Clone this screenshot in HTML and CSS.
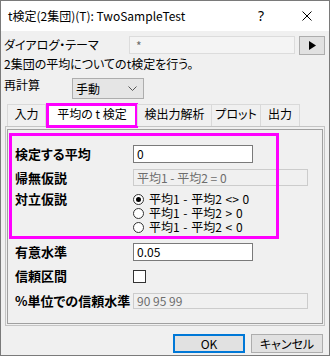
FILE: index.html
```html
<!DOCTYPE html>
<html>
<head>
    <title>t検定(2集団)</title>
    <meta charset="utf-8">
<link rel="stylesheet" href="styles.css">
</head>
<body>

  <div class="window">
    <div class="titlebar">
      <span class="title">t検定(2集団)(T): TwoSampleTest</span>
      <span class="help">?</span>
      <span class="close">
        <svg width="10" height="10" viewBox="0 0 10 10"><path d="M0.5 0.5 L9.5 9.5 M9.5 0.5 L0.5 9.5" stroke="#000" stroke-width="1" fill="none"/></svg>
      </span>
    </div>

    <div class="content">
      <div class="theme-row">
        <span class="theme-label">ダイアログ・テーマ</span>
        <div class="theme-input">*</div>
        <div class="theme-btn">
          <svg width="7" height="9" viewBox="0 0 7 9"><path d="M0 0 L7 4.5 L0 9 Z" fill="#000"/></svg>
        </div>
      </div>

      <div class="desc">2集団の平均についてのt検定を行う。</div>

      <div class="recalc-row">
        <span class="recalc-label">再計算</span>
        <div class="select">
          <span>手動</span>
          <svg width="9" height="5" viewBox="0 0 9 5"><path d="M0.5 0.5 L4.5 4.5 L8.5 0.5" stroke="#555" stroke-width="1" fill="none"/></svg>
        </div>
      </div>

      <div class="tabs">
        <div class="tab tab-in">入力</div>
        <div class="tab tab-active">平均の t 検定</div>
        <div class="tab tab-power">検出力解析</div>
        <div class="tab tab-plot">プロット</div>
        <div class="tab tab-out">出力</div>
      </div>

      <div class="panel">
        <div class="group">

          <div class="hl-wrap">
            <div class="row r-mean">
              <span class="lbl">検定する平均</span>
              <div class="field f-short">0</div>
            </div>
            <div class="row r-null">
              <span class="lbl">帰無仮説</span>
              <div class="field f-long disabled">平均1 - 平均2 = 0</div>
            </div>
            <div class="row r-alt">
              <span class="lbl">対立仮説</span>
              <div class="radios">
                <div class="radio"><span class="dot checked"></span>平均1 - 平均2 &lt;&gt; 0</div>
                <div class="radio"><span class="dot"></span>平均1 - 平均2 &gt; 0</div>
                <div class="radio"><span class="dot"></span>平均1 - 平均2 &lt; 0</div>
              </div>
            </div>
          </div>

          <div class="row r-sig">
            <span class="lbl">有意水準</span>
            <div class="field f-short">0.05</div>
          </div>
          <div class="row r-ci">
            <span class="lbl">信頼区間</span>
            <span class="check"></span>
          </div>
          <div class="row r-level">
            <span class="lbl">%単位での信頼水準</span>
            <div class="field f-long f-thin disabled">90 95 99</div>
          </div>

        </div>
      </div>

      <div class="footer">
        <button class="btn btn-ok">OK</button>
        <button class="btn">キャンセル</button>
      </div>
    </div>
  </div>

</body>
</html>
```

FILE: styles.css
```css
* {
  box-sizing: border-box;
}

body {
  margin: 0;
  font-family: "Noto Sans CJK JP", "Noto Sans", sans-serif;
  font-size: 12px;
  font-feature-settings: "palt";
  color: #000;
  background-color: #f0f0f0;
}

.window {
  width: 330px;
  height: 356px;
  border: 1px solid #7a7a7a;
  background-color: #f0f0f0;
}

/* title bar */
.titlebar {
  height: 30px;
  background-color: #fff;
  display: flex;
  align-items: center;
  padding-left: 7px;
}

.title {
  flex: 1;
  line-height: 16px;
}

.help,
.close {
  width: 46px;
  height: 30px;
  display: flex;
  align-items: center;
  justify-content: center;
}

.help {
  font-family: "Noto Sans", sans-serif;
  font-size: 14px;
  padding-bottom: 1px;
}

.close {
  width: 45px;
}

/* top rows */
.content {
  padding: 4px 3px 0 3px;
}

.theme-row {
  display: flex;
  align-items: center;
  height: 20px;
}

.theme-label {
  width: 125px;
  line-height: 16px;
}

.theme-input {
  width: 166px;
  height: 18px;
  border: 1px solid #dcdcdc;
  background-color: #f4f4f4;
  color: #6d6d6d;
  padding-left: 6px;
  line-height: 18px;
}

.theme-btn {
  width: 26px;
  height: 19px;
  margin-left: 4px;
  border: 1px solid #adadad;
  background-color: #e1e1e1;
  display: flex;
  align-items: center;
  justify-content: center;
}

.desc {
  margin-top: 2px;
  height: 14px;
  line-height: 14px;
}

.recalc-row {
  display: flex;
  margin-top: 7px;
}

.recalc-label {
  width: 68px;
  line-height: 14px;
}

.select {
  width: 72px;
  height: 21px;
  border: 1px solid #adadad;
  background-color: #e5e5e5;
  display: flex;
  align-items: center;
  justify-content: space-between;
  padding: 0 6px 0 3px;
}

/* tabs */
.tabs {
  display: flex;
  height: 22px;
  margin-top: 5px;
  padding-left: 3px;
  position: relative;
  z-index: 1;
}

.tab {
  height: 22px;
  border: 1px solid #d9d9d9;
  border-bottom: none;
  background-color: #f0f0f0;
  text-align: center;
  line-height: 18px;
  white-space: nowrap;
}

.tab-in { width: 39px; }
.tab-power { width: 75px; margin-left: -1px; }
.tab-plot { width: 50px; margin-left: -1px; }
.tab-out { width: 40px; margin-left: -1px; }

.tab-active {
  width: 92px;
  height: 25px;
  margin-top: -1px;
  border: 3px solid #ff00ff;
  background-color: #fff;
  line-height: 16px;
}

.panel {
  width: 320px;
  height: 200px;
  margin-left: 1px;
  border: 1px solid #c4c4c4;
  padding: 2px 1px 1px 1px;
}

.group {
  height: 100%;
  border: 1px solid #a0a0a0;
}

/* highlighted block */
.hl-wrap {
  position: relative;
  margin-top: 3px;
  padding: 3px 0 5px 0;
}

.hl-wrap::after {
  content: "";
  position: absolute;
  left: 1px;
  top: 0;
  bottom: 0;
  width: 264px;
  border: 3px solid #ff00ff;
  pointer-events: none;
}

.row {
  display: grid;
  grid-template-columns: 125px auto;
  align-items: center;
}

.lbl {
  font-weight: bold;
  font-size: 13px;
  padding-left: 7px;
  line-height: 16px;
  white-space: nowrap;
}

.field {
  height: 18px;
  border: 1px solid #7a7a7a;
  background-color: #fff;
  padding-left: 3px;
  line-height: 16px;
  white-space: nowrap;
}

.f-short { width: 120px; }
.f-long { width: 175px; }

.field.disabled {
  height: 17px;
  border-color: #cccccc;
  background-color: #f0f0f0;
  color: #6d6d6d;
  line-height: 15px;
}

.field.f-thin {
  height: 16px;
  line-height: 14px;
}

.r-mean { margin-top: 9px; }
.r-null { margin-top: 6px; }
.r-alt {
  margin-top: 6px;
  align-items: start;
}
.r-alt .lbl { line-height: 14px; }

.radio {
  display: flex;
  align-items: center;
  height: 14px;
  line-height: 14px;
  white-space: nowrap;
  word-spacing: 1px;
}

.dot {
  width: 11px;
  height: 11px;
  border: 1px solid #333;
  border-radius: 50%;
  background-color: #fff;
  margin-right: 5px;
  position: relative;
}

.dot.checked::after {
  content: "";
  position: absolute;
  left: 2px;
  top: 2px;
  width: 5px;
  height: 5px;
  border-radius: 50%;
  background-color: #000;
}

.r-sig { margin-top: 4px; }
.r-ci { margin-top: 7px; }
.r-level { margin-top: 9px; }

.check {
  width: 13px;
  height: 13px;
  border: 1px solid #333;
  background-color: #fff;
}

/* buttons */
.footer {
  display: flex;
  justify-content: flex-end;
  gap: 6px;
  margin-top: 8px;
  padding-right: 3px;
}

.btn {
  width: 72px;
  height: 19px;
  border: 1px solid #adadad;
  background-color: #e1e1e1;
  font-family: "Noto Sans CJK JP", "Noto Sans", sans-serif;
  font-size: 12px;
  font-feature-settings: "palt";
  line-height: 15px;
  padding: 0;
  color: #000;
}

.btn-ok {
  border: 2px solid #0078d7;
}
```
